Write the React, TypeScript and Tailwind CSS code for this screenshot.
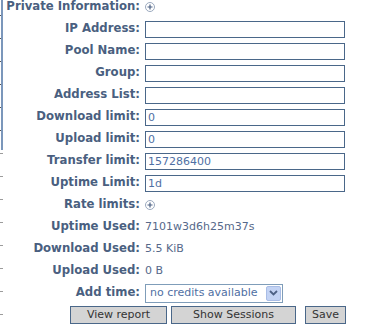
import React from 'react'

const font = { fontFamily: '"DejaVu Sans", Verdana, sans-serif' }

function PlusIcon() {
  return (
    <svg width="10" height="10" viewBox="0 0 10 10" className="block">
      <circle cx="5" cy="5" r="4.5" fill="white" stroke="#9aa8bd" strokeWidth="1" />
      <path d="M2.5 5h5M5 2.5v5" stroke="#4a5f82" strokeWidth="1.2" />
    </svg>
  )
}

function EdgeMarks() {
  const dark = [15, 38, 61, 84, 107, 130]
  const light = [153, 176, 199, 222, 245, 268, 291, 314]
  return (
    <svg width="4" height="334" className="block shrink-0">
      <rect x="1" y="0" width="2" height="150" fill="#7b97bb" />
      {dark.map((y) => (
        <rect key={y} x="0" y={y} width="1" height="1" fill="#555" />
      ))}
      {light.map((y) => (
        <rect key={y} x="0" y={y} width="3" height="1" fill="#9c9c9c" />
      ))}
    </svg>
  )
}

function Row({ label, children }: { label: string; children: React.ReactNode }) {
  return (
    <div className="flex h-[22px] items-center">
      <div className="w-[136px] shrink-0 text-right text-[11.7px] font-bold text-[#4a5f80]">{label}</div>
      <div className="ml-[5px] flex items-center">{children}</div>
    </div>
  )
}

function TextBox({ value = '' }: { value?: string }) {
  return (
    <div className="h-[17px] w-[200px] border border-[#4a6789] bg-white pl-[2px] leading-[15px] text-[#4f6fa3]">
      {value}
    </div>
  )
}

export default function App() {
  return (
    <div className="flex h-[334px] w-[373px] overflow-hidden bg-white text-[11px]" style={font}>
      <EdgeMarks />
      <div className="-mt-[4px] flex flex-col">
        <Row label="Private Information:">
          <PlusIcon />
        </Row>
        <Row label="IP Address:"><TextBox /></Row>
        <Row label="Pool Name:"><TextBox /></Row>
        <Row label="Group:"><TextBox /></Row>
        <Row label="Address List:"><TextBox /></Row>
        <Row label="Download limit:"><TextBox value="0" /></Row>
        <Row label="Upload limit:"><TextBox value="0" /></Row>
        <Row label="Transfer limit:"><TextBox value="157286400" /></Row>
        <Row label="Uptime Limit:"><TextBox value="1d" /></Row>
        <Row label="Rate limits:">
          <PlusIcon />
        </Row>
        <Row label="Uptime Used:">
          <span className="text-[#56698a]">7101w3d6h25m37s</span>
        </Row>
        <Row label="Download Used:">
          <span className="text-[#56698a]">5.5 KiB</span>
        </Row>
        <Row label="Upload Used:">
          <span className="text-[#56698a]">0 B</span>
        </Row>
        <Row label="Add time:">
          <div className="flex h-[19px] w-[138px] items-center border border-[#7f9db9] bg-white pl-[4px] pr-[1px] text-[#4f6fa3]">
            <span className="flex-1">no credits available</span>
            <span className="flex h-[15px] w-[15px] items-center justify-center rounded-[2px] border border-[#a9bde6] bg-[#c3d3f4]">
              <svg width="9" height="6" viewBox="0 0 9 6">
                <path d="M1 1l3.5 3.5L8 1" fill="none" stroke="#4d6185" strokeWidth="1.8" />
              </svg>
            </span>
          </div>
        </Row>
        <div className="flex h-[22px] items-center pl-[66px] text-[#333]">
          <button className="h-[18px] w-[97px] border border-[#4a6789] bg-[#d4d4d4] leading-[16px]">View report</button>
          <button className="ml-[4px] h-[18px] w-[125px] border border-[#4a6789] bg-[#d4d4d4] leading-[16px]">Show Sessions</button>
          <button className="ml-[9px] h-[18px] w-[41px] border border-[#4a6789] bg-[#d4d4d4] leading-[16px]">Save</button>
        </div>
      </div>
    </div>
  )
}
